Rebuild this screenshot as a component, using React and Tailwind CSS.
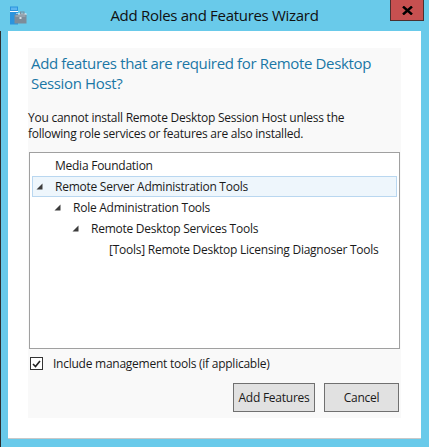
import React from "react";

const font = { fontFamily: '"Open Sans", "Noto Sans", sans-serif' };

function Arrow() {
  return (
    <svg width="7" height="7" viewBox="0 0 7 7" className="shrink-0">
      <polygon points="6.5,0.5 6.5,6.5 0.5,6.5" fill="#3c3c3c" />
    </svg>
  );
}

function Row({ level, label, expanded, selected }) {
  return (
    <div
      className={
        "h-[21px] flex items-center mx-[2px] border " +
        (selected ? "bg-[#eef6fc] border-[#b9d7f0]" : "border-transparent")
      }
    >
      <div style={{ width: 3 + level * 18 }} className="shrink-0" />
      <div className="w-[19px] shrink-0 flex items-center">
        {expanded ? <Arrow /> : null}
      </div>
      <span className="text-[12px] text-[#1a1a1a] whitespace-nowrap tracking-[-0.25px]">{label}</span>
    </div>
  );
}

export default function App() {
  return (
    <div className="w-[429px] h-[447px] bg-[#69caea] flex flex-col overflow-hidden" style={font}>
      {/* Title bar */}
      <div className="h-[31px] flex items-start relative shrink-0">
        <svg width="18" height="20" viewBox="0 0 18 20" className="absolute left-[9px] top-[6px]">
          <rect x="1" y="0.5" width="8" height="18" fill="#2b94de" />
          <rect x="1" y="5" width="8" height="1" fill="#ffffff" />
          <rect x="2" y="1.5" width="6" height="2.5" fill="#5db6f0" />
          <rect x="7.5" y="7" width="1" height="1" fill="#ffffff" />
          <rect x="9" y="7.5" width="8.5" height="1.5" fill="#ffffff" />
          <rect x="11.5" y="6" width="3.5" height="2" fill="none" stroke="#7d8c99" strokeWidth="1" />
          <rect x="5.5" y="8.5" width="12" height="9" fill="#7d8c99" />
          <rect x="6.5" y="9.5" width="10" height="1" fill="#a9b6c2" />
          <rect x="10.5" y="11" width="2" height="2" fill="#d8e0e6" />
        </svg>
        <div className="flex-1 text-center text-[15px] text-[#101010] pt-[4px] tracking-[-0.3px]">
          Add Roles and Features Wizard
        </div>
        <div className="absolute left-[390px] top-0 w-[34px] h-[21px] bg-[#c75050] border border-[#4a3030] border-t-0 flex items-center justify-center">
          <svg width="11" height="9" viewBox="0 0 11 9">
            <path d="M1 0.5 L10 8.5 M10 0.5 L1 8.5" stroke="#000" strokeWidth="2.4" />
          </svg>
        </div>
      </div>

      {/* Body */}
      <div className="flex-1 flex border-l border-[#2e2e2e] pl-[7px] pr-[8px] pb-[8px]">
        <div className="flex-1 bg-white border-b border-[#c8c8c8] pt-[17px] pb-[20px] px-[20px] flex">
          <div className="flex-1 bg-[#f9f9f9] flex flex-col">
            <div className="text-[15px] leading-[20px] text-[#1a77a6] pl-[3px] pt-[5px] tracking-[-0.35px]">
              Add features that are required for Remote Desktop
              <br />
              Session Host?
            </div>
            <div className="mt-[17px] text-[12px] leading-[16px] text-[#1a1a1a] tracking-[-0.25px]">
              You cannot install Remote Desktop Session Host unless the
              <br />
              following role services or features are also installed.
            </div>
            <div className="mt-[10px] ml-[1px] mr-[1px] h-[197px] bg-white border border-[#a0a0a0] pt-[2px]">
              <Row level={0} label="Media Foundation" />
              <Row level={0} label="Remote Server Administration Tools" expanded selected />
              <Row level={1} label="Role Administration Tools" expanded />
              <Row level={2} label="Remote Desktop Services Tools" expanded />
              <Row level={3} label="[Tools] Remote Desktop Licensing Diagnoser Tools" />
            </div>
            <div className="mt-[8px] h-[13px] flex items-center pl-[2px]">
              <div className="w-[13px] h-[13px] border border-[#333] bg-white flex items-center justify-center">
                <svg width="9" height="8" viewBox="0 0 9 8">
                  <path d="M1 4 L3.5 6.5 L8 1" stroke="#222" strokeWidth="1.6" fill="none" />
                </svg>
              </div>
              <span className="ml-[10px] text-[12px] leading-[16px] text-[#1a1a1a] tracking-[-0.25px]">
                Include management tools (if applicable)
              </span>
            </div>
            <div className="mt-[13px] flex justify-end gap-[9px] pr-[2px]">
              <button className="w-[82px] h-[29px] bg-[#e1e1e1] border border-[#707070] text-[12px] text-[#1a1a1a] tracking-[-0.25px]">
                Add Features
              </button>
              <button className="w-[75px] h-[29px] bg-[#e1e1e1] border border-[#707070] text-[12px] text-[#1a1a1a] tracking-[-0.25px]">
                Cancel
              </button>
            </div>
          </div>
        </div>
      </div>
    </div>
  );
}
